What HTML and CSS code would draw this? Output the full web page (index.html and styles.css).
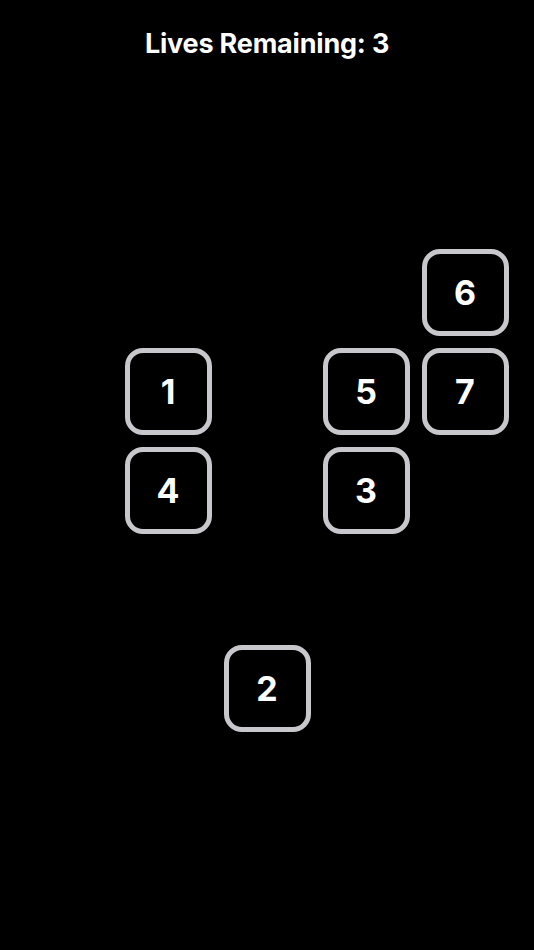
FILE: index.html
```html
<!DOCTYPE html>
<html>
<head>
<meta charset="utf-8">
<link rel="stylesheet" href="styles.css">
</head>
<body>
<div class="screen">
  <h1 class="lives">Lives Remaining: 3</h1>
  <div class="board">
    <div class="tile c5 r1">6</div>
    <div class="tile c2 r2">1</div>
    <div class="tile c4 r2">5</div>
    <div class="tile c5 r2">7</div>
    <div class="tile c2 r3">4</div>
    <div class="tile c4 r3">3</div>
    <div class="tile c3 r5">2</div>
  </div>
</div>
</body>
</html>
```
FILE: styles.css
```css
html, body {
  margin: 0;
  padding: 0;
  background: #000;
}
.screen {
  width: 534px;
  height: 950px;
  background: #000;
  font-family: Inter, "Noto Sans", sans-serif;
  color: #fff;
  display: flex;
  flex-direction: column;
  align-items: center;
}
.lives {
  margin: 28px 0 0 0;
  font-size: 27px;
  line-height: 32px;
  font-weight: 700;
  letter-spacing: -0.2px;
}
.board {
  margin-top: 189px;
  display: grid;
  grid-template-columns: repeat(5, 87px);
  grid-template-rows: repeat(5, 87px);
  gap: 12px;
}
.tile {
  box-sizing: border-box;
  border: 5px solid #c7c7cc;
  border-radius: 18px;
  display: flex;
  align-items: center;
  justify-content: center;
  font-size: 34px;
  font-weight: 700;
  color: #fff;
}
.c2 { grid-column: 2; }
.c3 { grid-column: 3; }
.c4 { grid-column: 4; }
.c5 { grid-column: 5; }
.r1 { grid-row: 1; }
.r2 { grid-row: 2; }
.r3 { grid-row: 3; }
.r5 { grid-row: 5; }
```
